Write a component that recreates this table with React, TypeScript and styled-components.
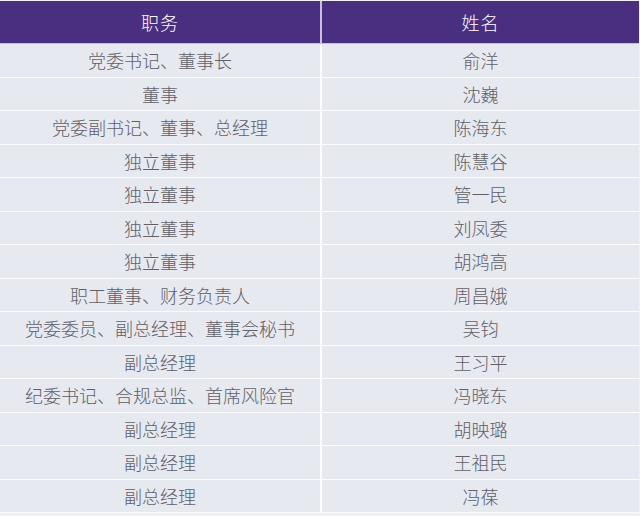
import styled, { createGlobalStyle } from "styled-components"

const GlobalStyle = createGlobalStyle`
  body {
    margin: 0;
    background: #f1f1f3;
    font-family: "Noto Sans CJK SC", sans-serif;
  }
`

const rows: [string, string][] = [
  ["党委书记、董事长", "俞洋"],
  ["董事", "沈巍"],
  ["党委副书记、董事、总经理", "陈海东"],
  ["独立董事", "陈慧谷"],
  ["独立董事", "管一民"],
  ["独立董事", "刘凤委"],
  ["独立董事", "胡鸿高"],
  ["职工董事、财务负责人", "周昌娥"],
  ["党委委员、副总经理、董事会秘书", "吴钧"],
  ["副总经理", "王习平"],
  ["纪委书记、合规总监、首席风险官", "冯晓东"],
  ["副总经理", "胡映璐"],
  ["副总经理", "王祖民"],
  ["副总经理", "冯葆"],
]

const App = () => {
  return (
    <>
      <GlobalStyle />
      <Table>
        <HeadRow>
          <HeadCell>职务</HeadCell>
          <HeadCell>姓名</HeadCell>
        </HeadRow>
        {rows.map(([title, name]) => (
          <Row key={title + name}>
            <Cell>{title}</Cell>
            <Cell>{name}</Cell>
          </Row>
        ))}
      </Table>
    </>
  )
}

export default App

const Table = styled.div`
  width: 639px;
  padding-top: 1px;
  background: #f1f1f3;
`

const HeadRow = styled.div`
  display: grid;
  grid-template-columns: 320px 1fr;
  column-gap: 2px;
  background: #c9c0dc;
  border-bottom: 1px solid #c7bedb;
`

const HeadCell = styled.div`
  height: 42px;
  display: flex;
  align-items: center;
  justify-content: center;
  background: #4a2e80;
  color: #ffffff;
  font-size: 18px;
  font-weight: 300;
  letter-spacing: 1px;
`

const Row = styled.div`
  display: grid;
  grid-template-columns: 320px 1fr;
  column-gap: 2px;
  background: #fbfbfd;
  border-bottom: 1px solid #fbfbfd;
`

const Cell = styled.div`
  height: 32.5px;
  display: flex;
  align-items: center;
  justify-content: center;
  background: #e7e9f1;
  color: #606066;
  font-size: 18px;
  font-weight: 300;
`
